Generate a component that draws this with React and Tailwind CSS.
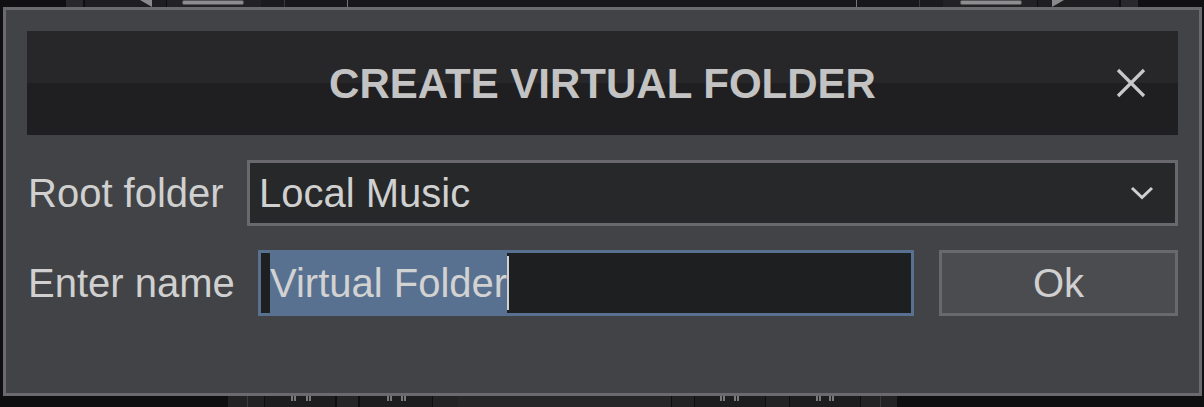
import React from "react";

function Tick() {
  return (
    <div className="flex gap-[1px] h-[5px]">
      <div className="w-[2px] bg-[#7a7a7c]" />
      <div className="w-[2px] bg-[#7a7a7c]" />
    </div>
  );
}

function TopHalf() {
  return (
    <div className="flex h-[7px] w-[602px] shrink-0">
      <div className="w-[66px] bg-[#101012]" />
      <div className="w-[17px] bg-[#29292c]" />
      <div className="w-[2px] bg-[#0f0f11]" />
      <div className="w-[55px] bg-[#1e1e20]" />
      <div className="w-[12px] bg-[#1e1e20]">
        <svg width="12" height="7" viewBox="0 0 12 7">
          <path d="M0 0 H12 V7 Z" fill="#8a8a8c" />
        </svg>
      </div>
      <div className="w-[14px] bg-[#1e1e20]" />
      <div className="w-[1px] bg-[#0d0d0f]" />
      <div className="w-[94px] bg-[#222224] flex pl-[15px]">
        <div className="w-[62px] h-[5px] rounded-[2px] bg-[#8e8e90] border border-[#555557]" />
      </div>
      <div className="w-[23px] bg-[#1b1b1d]" />
      <div className="w-[1px] bg-[#3a3a3c]" />
      <div className="flex-1 bg-[#18181a] flex">
        <div className="w-[62px]" />
        <div className="w-[1px] bg-[#777779]" />
      </div>
    </div>
  );
}

function BottomStrip() {
  return (
    <div className="flex h-[11px] w-full">
      <div className="w-[228px] bg-[#0e0e11]" />
      <div className="w-[36px] bg-[#222225] flex">
        <div className="w-[19px]" />
        <div className="w-[1px] bg-[#3c3c3e]" />
      </div>
      <div className="w-[1px] bg-[#0e0e11]" />
      <div className="w-[70px] bg-[#1d1d1f] flex gap-[10px] pl-[26px]">
        <Tick />
        <Tick />
      </div>
      <div className="w-[2px] bg-[#0e0e11]" />
      <div className="w-[21px] bg-[#252527]" />
      <div className="w-[2px] bg-[#0e0e11]" />
      <div className="w-[72px] bg-[#1d1d1f] flex gap-[9px] pl-[27px]">
        <Tick />
        <Tick />
      </div>
      <div className="w-[1px] bg-[#0e0e11]" />
      <div className="w-[25px] bg-[#232325]" />
      <div className="w-[213px] bg-[#262628]" />
      <div className="w-[1px] bg-[#0e0e11]" />
      <div className="w-[22px] bg-[#222224]" />
      <div className="w-[1px] bg-[#0e0e11]" />
      <div className="w-[70px] bg-[#1d1d1f] flex gap-[9px] pl-[25px]">
        <Tick />
        <Tick />
      </div>
      <div className="w-[1px] bg-[#0e0e11]" />
      <div className="w-[23px] bg-[#232325]" />
      <div className="w-[1px] bg-[#0e0e11]" />
      <div className="w-[70px] bg-[#1d1d1f] flex gap-[8px] pl-[26px]">
        <Tick />
        <Tick />
      </div>
      <div className="w-[1px] bg-[#0e0e11]" />
      <div className="w-[36px] bg-[#232325] flex">
        <div className="w-[19px]" />
        <div className="w-[1px] bg-[#3c3c3e]" />
      </div>
      <div className="flex-1 bg-[#0e0e11]" />
    </div>
  );
}

export default function App() {
  return (
    <div className="relative w-[1204px] h-[407px] bg-[#101013] overflow-hidden font-['Liberation_Sans',Arial,sans-serif] flex flex-col">
      <div className="flex h-[7px]">
        <TopHalf />
        <div className="-scale-x-100">
          <TopHalf />
        </div>
      </div>
      <div className="flex-1" />
      <BottomStrip />

      <div className="absolute left-[3px] top-[7px] w-[1199px] h-[389px] border-[3px] border-[#6b6b6f] bg-[#424347] p-[21px] flex flex-col">
        <div className="h-[104px] flex items-center justify-between bg-[linear-gradient(#272729_50%,#1f1f21_50%)]">
          <div className="w-[62px]" />
          <div className="text-[42px] font-bold text-[#c3c3c3] leading-none pt-[2px]">
            CREATE VIRTUAL FOLDER
          </div>
          <div className="w-[62px] flex items-center">
            <svg width="30" height="30" viewBox="0 0 30 30">
              <path d="M2 2 L28 28 M28 2 L2 28" stroke="#c8c8c8" strokeWidth="3.2" fill="none" />
            </svg>
          </div>
        </div>

        <div className="mt-[25px] flex items-center h-[66px]">
          <div className="w-[220px] pl-[1px] text-[40px] text-[#d0d0d0] leading-none">Root folder</div>
          <div className="flex-1 h-full border-[3px] border-[#69696d] bg-[#27282a] flex items-center justify-between pl-[9px] pr-[21px]">
            <span className="text-[40px] text-[#d0d0d0] leading-none">Local Music</span>
            <svg width="24" height="14" viewBox="0 0 24 14">
              <path d="M2 2 L12 11.5 L22 2" stroke="#d0d0d0" strokeWidth="3" fill="none" />
            </svg>
          </div>
        </div>

        <div className="mt-[24px] flex items-center h-[66px]">
          <div className="w-[231px] pl-[1px] text-[40px] text-[#d0d0d0] leading-none">Enter name</div>
          <div className="w-[656px] h-full border-[3px] border-[#587191] bg-[#1e1f21] flex items-stretch pl-[9px]">
            <span className="bg-[#587191] flex items-center text-[40px] text-[#d2d2d2] leading-none">
              Virtual Folder
            </span>
            <div className="w-[2px] my-[3px] bg-[#d0d0d0]" />
          </div>
          <div className="ml-[25px] flex-1 h-full border-[3px] border-[#69696d] bg-[#4b4c50] flex items-center justify-center text-[40px] text-[#d0d0d0] leading-none">
            Ok
          </div>
        </div>
      </div>
    </div>
  );
}
